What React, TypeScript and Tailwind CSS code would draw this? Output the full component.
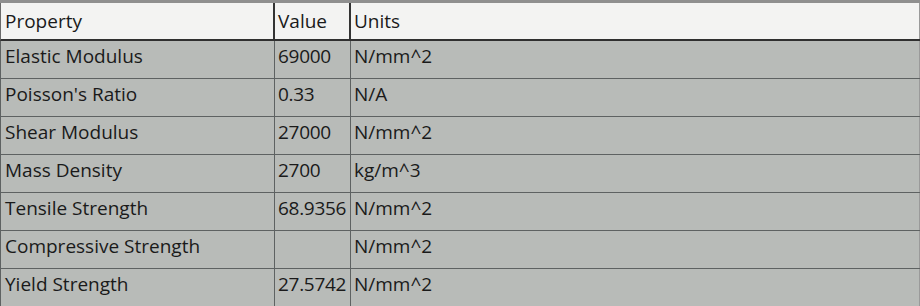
import React from "react";

const rows: [string, string, string][] = [
  ["Elastic Modulus", "69000", "N/mm^2"],
  ["Poisson's Ratio", "0.33", "N/A"],
  ["Shear Modulus", "27000", "N/mm^2"],
  ["Mass Density", "2700", "kg/m^3"],
  ["Tensile Strength", "68.9356", "N/mm^2"],
  ["Compressive Strength", "", "N/mm^2"],
  ["Yield Strength", "27.5742", "N/mm^2"],
];

export default function App() {
  return (
    <div
      className="w-[920px] h-[306px] overflow-hidden bg-[#b8bbb8] text-[#1a1a1a] text-[19px] leading-none"
      style={{ fontFamily: '"Open Sans", "Noto Sans", sans-serif' }}
    >
      <div className="h-[3px] bg-[#8f8f8f]" />
      <div className="flex h-[38px] bg-[#f3f3f2] border-b-2 border-[#2f2f2f] border-l border-l-[#6a6a6a]">
        <div className="w-[274px] border-r-2 border-[#333333] flex items-center pl-[4px] pt-[1px]">Property</div>
        <div className="w-[76px] border-r-2 border-[#333333] flex items-center pl-[3px] pt-[1px]">Value</div>
        <div className="flex-1 flex items-center pl-[3px] pt-[1px] border-r border-[#9a9a9a]">Units</div>
      </div>
      {rows.map(([p, v, u]) => (
        <div
          key={p}
          className="flex h-[38px] border-b border-[#5e6262] border-l border-l-[#5e6262]"
        >
          <div className="w-[274px] border-r border-[#5e6262] flex items-center pl-[4px] pb-[6px]">{p}</div>
          <div className="w-[76px] border-r border-[#5e6262] flex items-center pl-[3px] pb-[6px] whitespace-nowrap tracking-[-0.3px]">{v}</div>
          <div className="flex-1 flex items-center pl-[3px] pb-[6px] border-r border-[#9a9a9a]">{u}</div>
        </div>
      ))}
    </div>
  );
}
